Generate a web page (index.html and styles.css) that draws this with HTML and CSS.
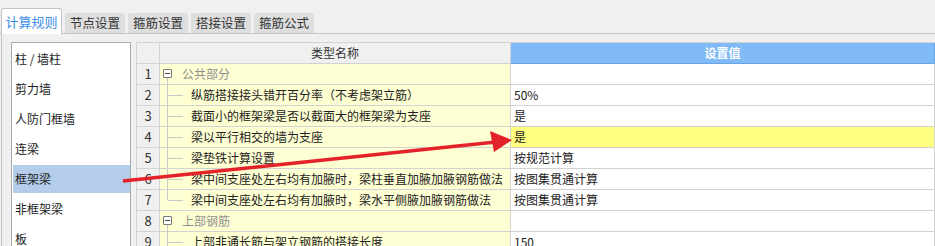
FILE: index.html
```html
<!DOCTYPE html>
<html lang="zh">
  <head>
    <meta charset="UTF-8" />
    <title>计算规则</title>
    <link rel="stylesheet" href="styles.css">
  </head>
  <body>
    <div class="app">
      <div class="tabs">
        <div class="tab active">计算规则</div>
        <div class="tab">节点设置</div>
        <div class="tab">箍筋设置</div>
        <div class="tab">搭接设置</div>
        <div class="tab">箍筋公式</div>
      </div>

      <div class="main">
        <ul class="side">
          <li>柱 / 墙柱</li>
          <li>剪力墙</li>
          <li>人防门框墙</li>
          <li>连梁</li>
          <li class="on">框架梁</li>
          <li>非框架梁</li>
          <li>板</li>
        </ul>

        <div class="grid">
          <div class="hd num"></div>
          <div class="hd">类型名称</div>
          <div class="hd blue">设置值</div>

          <div class="num">1</div>
          <div class="name group first"><span class="box"></span>公共部分</div>
          <div class="val"></div>

          <div class="num">2</div>
          <div class="name child">纵筋搭接接头错开百分率（不考虑架立筋）</div>
          <div class="val">50%</div>

          <div class="num">3</div>
          <div class="name child">截面小的框架梁是否以截面大的框架梁为支座</div>
          <div class="val">是</div>

          <div class="num">4</div>
          <div class="name child">梁以平行相交的墙为支座</div>
          <div class="val hot">是</div>

          <div class="num">5</div>
          <div class="name child">梁垫铁计算设置</div>
          <div class="val">按规范计算</div>

          <div class="num">6</div>
          <div class="name child">梁中间支座处左右均有加腋时，梁柱垂直加腋加腋钢筋做法</div>
          <div class="val">按图集贯通计算</div>

          <div class="num">7</div>
          <div class="name child last">梁中间支座处左右均有加腋时，梁水平侧腋加腋钢筋做法</div>
          <div class="val">按图集贯通计算</div>

          <div class="num">8</div>
          <div class="name group"><span class="box"></span>上部钢筋</div>
          <div class="val"></div>

          <div class="num">9</div>
          <div class="name child">上部非通长筋与架立钢筋的搭接长度</div>
          <div class="val">150</div>
        </div>
      </div>

      <svg class="arrow" width="935" height="246" viewBox="0 0 935 246">
        <line x1="123" y1="181" x2="496" y2="142" stroke="#e4222a" stroke-width="3.5" />
        <polygon points="512,140 490,131 494,152" fill="#e4222a" />
      </svg>
    </div>
  </body>
</html>
```

FILE: styles.css
```css
* {
  margin: 0;
  padding: 0;
  box-sizing: border-box;
}

body {
  width: 935px;
  height: 246px;
  overflow: hidden;
  background: #f0f0f0;
  font-family: "Noto Sans CJK SC", "Microsoft YaHei", sans-serif;
  font-size: 12px;
  color: #222;
}

.app {
  position: relative;
  height: 246px;
}

/* tabs */
.tabs {
  display: flex;
  align-items: flex-end;
  gap: 3px;
  height: 34px;
  padding-left: 1px;
  border-bottom: 1px solid #c4c4c4;
}

.tab {
  width: 60px;
  height: 20px;
  line-height: 20px;
  text-align: center;
  background: #dedede;
  border-radius: 3px 3px 0 0;
  color: #333;
  font-size: 12.5px;
}

.tab.active {
  width: 61px;
  height: 26px;
  line-height: 25px;
  margin-bottom: -1px;
  background: #fff;
  border: 1px solid #c4c4c4;
  border-bottom: none;
  color: #3a8ee6;
  font-size: 13px;
}

/* body */
.main {
  display: flex;
  gap: 5px;
  height: 212px;
  margin-left: 1px;
  padding: 8px 0 0 9px;
  border-left: 1px solid #c4c4c4;
  overflow: hidden;
}

.side {
  list-style: none;
  width: 120px;
  height: 260px;
  flex-shrink: 0;
  padding-top: 2px;
  background: #fff;
  border: 1px solid #ababab;
}

.side li {
  height: 28px;
  line-height: 28px;
  margin: 0 0 2px 1px;
  padding-left: 2px;
}

.side li.on {
  background: #b4cdeb;
}

/* grid */
.grid {
  flex: 1;
  display: grid;
  grid-template-columns: 23px 351px 1fr;
  grid-auto-rows: 21px;
  align-self: flex-start;
  background: #fff;
  border-left: 1px solid #d2d2d2;
  border-top: 1px solid #d2d2d2;
}

.grid > div {
  line-height: 20px;
  border-right: 1px solid #d2d2d2;
  border-bottom: 1px solid #d2d2d2;
  white-space: nowrap;
  overflow: hidden;
}

.hd {
  background: #f0f0f0;
  text-align: center;
  color: #333;
}

.hd.blue {
  background: #80bbf7;
  border-color: #68a5e6 !important;
  color: #fff;
  font-weight: bold;
}

.num {
  background: #f0f0f0;
  text-align: center;
  color: #333;
  font-size: 13px;
}

.name {
  position: relative;
  background: #ffffd4;
}

.val {
  padding-left: 3px;
}

.val.hot {
  background: #ffff80;
}

/* tree */
.group {
  padding-left: 22px;
  color: #8f8f8f;
}

.group .box {
  position: absolute;
  left: 3px;
  top: 5px;
  width: 9px;
  height: 9px;
  border: 1px solid #7a7a7a;
  border-radius: 1px;
  background: #fff;
}

.group .box::after {
  content: "";
  position: absolute;
  left: 1px;
  top: 3px;
  width: 5px;
  height: 1px;
  background: #444;
}

.group::after {
  content: "";
  position: absolute;
  left: 7px;
  top: 14px;
  bottom: -1px;
  width: 1px;
  background: #c8c8c8;
}

.child {
  padding-left: 31px;
}

.child::before {
  content: "";
  position: absolute;
  left: 7px;
  top: 0;
  bottom: -1px;
  width: 1px;
  background: #c8c8c8;
}

.child.last::before {
  bottom: 10px;
}

.child::after {
  content: "";
  position: absolute;
  left: 8px;
  top: 10px;
  width: 15px;
  height: 1px;
  background: #c8c8c8;
}

/* annotation */
.arrow {
  position: absolute;
  left: 0;
  top: 0;
  pointer-events: none;
}
```
